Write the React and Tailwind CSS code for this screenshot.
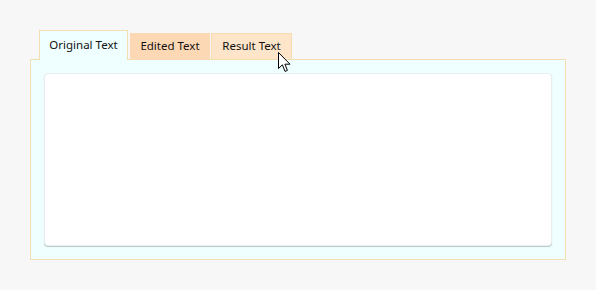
import React from 'react';

const tabs = [
  { label: 'Original Text', active: true, cls: 'w-[89px] h-[30px] bg-[#efffff] border-[#f2deb0] border-b-0' },
  { label: 'Edited Text', cls: 'ml-[2px] w-[80px] h-[27px] bg-[#fdd8b5] border-[#fbd9b6]' },
  { label: 'Result Text', cls: 'ml-[1px] w-[81px] h-[27px] bg-[#fee5c9] border-[#f7dcb0]' },
];

const Cursor = () => (
  <svg className="absolute z-20 left-[278px] top-[52px]" width="13" height="21" viewBox="0 0 13 21">
    <path d="M0.5 0.5 L0.5 16.5 L4.4 12.8 L7 19.4 L9.4 18.4 L6.9 12.2 L12 12.2 Z" fill="#fff" stroke="#000" strokeWidth="1" />
  </svg>
);

export default function App() {
  return (
    <div className="relative w-[596px] h-[290px] bg-[#f7f7f7] pt-[30px] pl-[30px]" style={{ fontFamily: '"Noto Sans", "Open Sans", sans-serif' }}>
      <div className="w-[536px]">
        <div className="relative z-10 flex items-end pl-[9px] -mb-px">
          {tabs.map((t) => (
            <div
              key={t.label}
              className={`flex items-center justify-center border text-[11.5px] leading-none text-[#111] ${t.cls}`}
            >
              <span className="-mt-[1px]">{t.label}</span>
            </div>
          ))}
        </div>
        <div className="h-[201px] border border-[#f2deb0] bg-[#efffff] p-[13px]">
          <div className="h-[173px] rounded-[4px] border border-[#e8eded] bg-white shadow-[0_1px_1px_rgba(0,0,0,0.22)]" />
        </div>
      </div>
      <Cursor />
    </div>
  );
}
